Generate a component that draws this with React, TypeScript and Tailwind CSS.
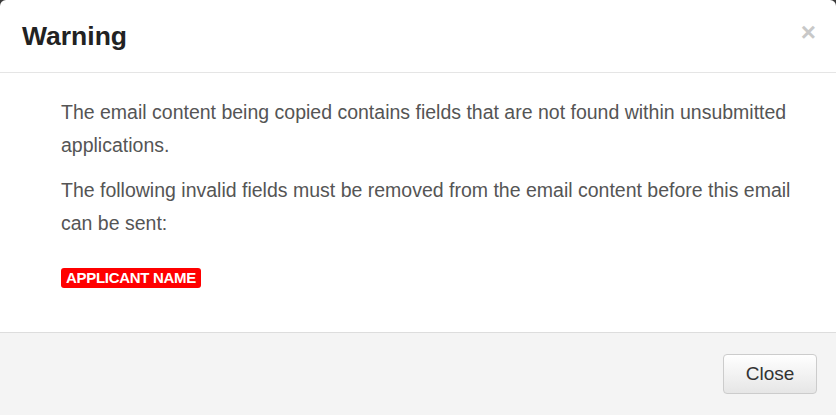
export default function App() {
  return (
    <div className="h-[415px] w-[836px] overflow-hidden bg-[#3a3a3a] font-['Liberation_Sans',Arial,sans-serif]">
      <div className="flex h-[415px] flex-col overflow-hidden rounded-t-[6px] bg-white">
        <div className="flex h-[73px] shrink-0 items-center justify-between border-b border-[#e5e5e5] pl-[22px] pr-[20px]">
          <h3 className="text-[26.5px] font-bold leading-none text-[#222]">Warning</h3>
          <button className="-mt-[8px] text-[26px] font-bold leading-none text-[#c8c8c8]">×</button>
        </div>
        <div className="flex-1 pl-[61px] pr-[30px] pt-[23px] text-[19.5px] leading-[33px] text-[#555]">
          <p>
            The email content being copied contains fields that are not found within unsubmitted
            applications.
          </p>
          <p className="mt-[12px]">
            The following invalid fields must be removed from the email content before this email
            can be sent:
          </p>
          <div className="mt-[28px] flex">
            <span className="rounded-[3px] bg-[#ff0000] px-[5px] text-[15px] font-bold leading-[20px] tracking-[-0.3px] text-white">
              APPLICANT NAME
            </span>
          </div>
        </div>
        <div className="flex h-[83px] shrink-0 items-start justify-end border-t border-[#dddddd] bg-[#f4f4f4] pr-[19px] pt-[21px]">
          <button className="h-[40px] w-[94px] rounded-[4px] border border-[#cccccc] bg-gradient-to-b from-white to-[#e6e6e6] text-[19px] text-[#333] shadow-[inset_0_1px_0_rgba(255,255,255,0.2)]">
            Close
          </button>
        </div>
      </div>
    </div>
  );
}
